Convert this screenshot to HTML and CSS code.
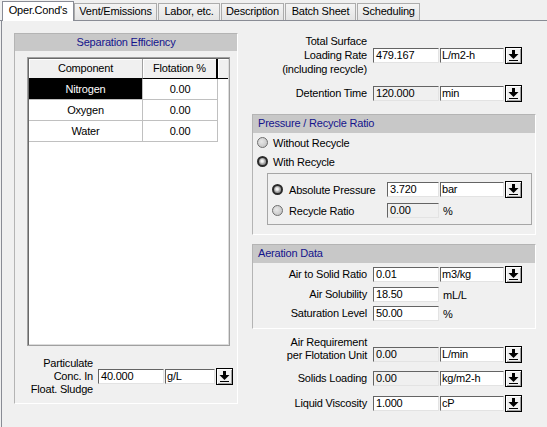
FILE: index.html
```html
<!DOCTYPE html>
<html>
<head>
<meta charset="utf-8">
<link rel="stylesheet" href="styles.css">
</head>
<body>
<div class="tabs">
  <div class="tab active t1">Oper.Cond's</div>
  <div class="tab t2">Vent/Emissions</div>
  <div class="tab t3">Labor, etc.</div>
  <div class="tab t4">Description</div>
  <div class="tab t5">Batch Sheet</div>
  <div class="tab t6">Scheduling</div>
</div>
<div class="page">
  <div class="group lgroup">
    <div class="ghead center">Separation Efficiency</div>
    <div class="grid">
      <div class="gtable">
        <div class="gh c1">Component</div><div class="gh c2">Flotation %</div><div class="gh c3"></div>
        <div class="gc c1 sel">Nitrogen</div><div class="gc c2">0.00</div><div class="gx"></div>
        <div class="gc c1">Oxygen</div><div class="gc c2">0.00</div><div class="gx"></div>
        <div class="gc c1">Water</div><div class="gc c2">0.00</div><div class="gx"></div>
      </div>
    </div>
    <div class="frow part">
      <div class="lbl plbl">Particulate<br>Conc. In<br>Float. Sludge</div>
      <div class="inp">40.000</div>
      <div class="unit u50">g/L</div>
      <span class="dd"><svg width="15" height="15" viewBox="0 0 15 15"><rect x="6" y="2" width="3" height="4"/><path d="M2.5 6h10l-5 5z"/><rect x="3" y="12" width="9" height="1"/></svg></span>
    </div>
  </div>

  <div class="right">
    <div class="frow r1">
      <div class="lbl rl">Total Surface<br>Loading Rate<br>(including recycle)</div>
      <div class="inp">479.167</div>
      <div class="unit">L/m2-h</div>
      <span class="dd"><svg width="15" height="15" viewBox="0 0 15 15"><rect x="6" y="2" width="3" height="4"/><path d="M2.5 6h10l-5 5z"/><rect x="3" y="12" width="9" height="1"/></svg></span>
    </div>
    <div class="frow r2">
      <div class="lbl rl">Detention Time</div>
      <div class="inp ro">120.000</div>
      <div class="unit">min</div>
      <span class="dd"><svg width="15" height="15" viewBox="0 0 15 15"><rect x="6" y="2" width="3" height="4"/><path d="M2.5 6h10l-5 5z"/><rect x="3" y="12" width="9" height="1"/></svg></span>
    </div>

    <div class="group pgroup">
      <div class="ghead">Pressure / Recycle Ratio</div>
      <div class="rrow"><span class="radio"></span><span>Without Recycle</span></div>
      <div class="rrow"><span class="radio on"></span><span>With Recycle</span></div>
      <div class="inner">
        <div class="irow">
          <span class="radio on"></span><span class="ilbl">Absolute Pressure</span>
          <div class="inp w52">3.720</div>
          <div class="unit">bar</div>
          <span class="dd"><svg width="15" height="15" viewBox="0 0 15 15"><rect x="6" y="2" width="3" height="4"/><path d="M2.5 6h10l-5 5z"/><rect x="3" y="12" width="9" height="1"/></svg></span>
        </div>
        <div class="irow ir2">
          <span class="radio"></span><span class="ilbl">Recycle Ratio</span>
          <div class="inp w52 ro">0.00</div>
          <span class="utext">%</span>
        </div>
      </div>
    </div>

    <div class="group agroup">
      <div class="ghead">Aeration Data</div>
      <div class="frow a1">
        <div class="lbl al">Air to Solid Ratio</div>
        <div class="inp">0.01</div>
        <div class="unit">m3/kg</div>
        <span class="dd"><svg width="15" height="15" viewBox="0 0 15 15"><rect x="6" y="2" width="3" height="4"/><path d="M2.5 6h10l-5 5z"/><rect x="3" y="12" width="9" height="1"/></svg></span>
      </div>
      <div class="frow a2">
        <div class="lbl al">Air Solubility</div>
        <div class="inp">18.50</div>
        <span class="utext">mL/L</span>
      </div>
      <div class="frow a3">
        <div class="lbl al">Saturation Level</div>
        <div class="inp">50.00</div>
        <span class="utext">%</span>
      </div>
    </div>

    <div class="frow r3">
      <div class="lbl rl">Air Requirement<br>per Flotation Unit</div>
      <div class="inp ro">0.00</div>
      <div class="unit">L/min</div>
      <span class="dd low"><svg width="15" height="15" viewBox="0 0 15 15"><rect x="6" y="2" width="3" height="4"/><path d="M2.5 6h10l-5 5z"/><rect x="3" y="12" width="9" height="1"/></svg></span>
    </div>
    <div class="frow r4">
      <div class="lbl rl">Solids Loading</div>
      <div class="inp ro">0.00</div>
      <div class="unit">kg/m2-h</div>
      <span class="dd"><svg width="15" height="15" viewBox="0 0 15 15"><rect x="6" y="2" width="3" height="4"/><path d="M2.5 6h10l-5 5z"/><rect x="3" y="12" width="9" height="1"/></svg></span>
    </div>
    <div class="frow r5">
      <div class="lbl rl">Liquid Viscosity</div>
      <div class="inp">1.000</div>
      <div class="unit">cP</div>
      <span class="dd"><svg width="15" height="15" viewBox="0 0 15 15"><rect x="6" y="2" width="3" height="4"/><path d="M2.5 6h10l-5 5z"/><rect x="3" y="12" width="9" height="1"/></svg></span>
    </div>
  </div>
</div>
</body>
</html>
```
FILE: styles.css
```css
* { box-sizing: border-box; }
html, body { margin: 0; padding: 0; }
body {
  width: 547px;
  height: 427px;
  overflow: hidden;
  background: #f0f0f0;
  font-family: "Liberation Sans", Arial, sans-serif;
  font-size: 11px;
  letter-spacing: -0.2px;
  color: #000;
}

/* tabs */
.tabs {
  display: flex;
  align-items: flex-end;
  height: 21px;
  padding-left: 2px;
  border-bottom: 1px solid #898c95;
}
.tab {
  height: 17px;
  line-height: 15px;
  text-align: center;
  white-space: nowrap;
  border: 1px solid #acacac;
  border-bottom: none;
  background: linear-gradient(#f4f4f4, #e4e4e4);
  margin-left: 1px;
}
.tab.active {
  height: 20px;
  line-height: 17px;
  margin-bottom: -1px;
  margin-left: 0;
  background: #fff;
  border-color: #898c95;
}
.t1 { width: 72px; }
.t2 { width: 83px; margin-left: 0; }
.t3 { width: 62px; }
.t4 { width: 63px; }
.t5 { width: 71px; }
.t6 { width: 63px; }

/* page */
.page {
  display: flex;
  align-items: flex-start;
  height: 406px;
  margin-left: 1px;
  border-left: 1px solid #898c95;
  padding-top: 12px;
}

.group {
  border: 1px solid;
  border-color: #b4b4b4 #ffffff #ffffff #b4b4b4;
}
.ghead {
  height: 18px;
  line-height: 17px;
  background: #c8c8c8;
  color: #14148c;
  padding-left: 5px;
}
.ghead.center { text-align: center; padding-left: 0; height: 17px; line-height: 16px; }

/* left group */
.lgroup {
  width: 224px;
  height: 371px;
  margin-left: 12px;
}
.grid {
  width: 203px;
  height: 289px;
  margin: 6px 0 0 12px;
  border: 1px solid #a0a0a0;
  box-shadow: inset 1px 1px #696969, inset -1px -1px #dcdcdc;
  padding: 1px;
  background: #fff;
}
.gtable {
  display: grid;
  grid-template-columns: 114px 75px 1fr;
}
.gh {
  height: 20px;
  line-height: 18px;
  background: #f0f0f0;
  border-bottom: 1px solid #000;
  text-align: center;
  box-shadow: inset 1px 1px #fff;
}
.gh.c1 { border-right: 1px solid #a0a0a0; }
.gh.c2 { border-right: 2px solid #000; }
.gh.c3 { background: #f0f0f0; }
.gc {
  height: 21px;
  line-height: 20px;
  text-align: center;
  border-right: 1px solid #c0c0c0;
  border-bottom: 1px solid #c0c0c0;
  background: #fff;
}
.gc.sel { background: #000; color: #fff; }
.gx { height: 21px; }

/* form rows */
.frow { display: flex; align-items: center; }
.lbl {
  text-align: right;
  line-height: 13px;
  white-space: nowrap;
  margin-right: 6px;
}
.inp, .unit {
  height: 15px;
  line-height: 13px;
  padding-left: 2px;
  background: #fff;
  border-top: 1px solid #646464;
  border-left: 1px solid #646464;
  border-right: 1px solid #e3e3e3;
  border-bottom: 1px solid #e3e3e3;
  white-space: nowrap;
  overflow: hidden;
}
.inp { width: 66px; }
.inp.ro { background: #f0f0f0; }
.inp.w52 { width: 52px; }
.unit { width: 64px; margin-left: 1px; padding-left: 1px; }
.unit.u50 { width: 50px; }
.utext { margin-left: 1px; padding-left: 3px; }
.dd {
  display: block;
  width: 17px;
  height: 17px;
  margin-left: 1px;
  border: 1px solid #000;
  background: #f0f0f0;
  box-shadow: inset 1px 1px #fff, inset -1px -1px #a0a0a0;
}
.dd svg { display: block; fill: #000; }
.dd.low { margin-bottom: -1px; }

.part { height: 39px; margin-top: 11px; }
.plbl { width: 78px; margin-right: 5px; line-height: 13px; }

/* right column */
.right {
  width: 284px;
  margin-left: 14px;
  display: flex;
  flex-direction: column;
}
.rl { width: 115px; }
.al { width: 114px; }
.r1 { height: 42px; margin-top: 1px; }
.r1 .lbl { line-height: 14px; }
.r2 { height: 17px; margin-top: 9px; }

.pgroup { height: 121px; margin-top: 12px; }
.rrow {
  display: flex;
  align-items: center;
  height: 19px;
  padding-left: 4px;
}
.rrow .radio { margin-right: 5px; }
.radio {
  display: block;
  flex: none;
  width: 11px;
  height: 11px;
  border-radius: 50%;
  border: 1px solid #6e6e6e;
  background: radial-gradient(circle at 40% 40%, #e8e8e8, #bdbdbd);
}
.radio.on {
  border: 2px solid #2a2a2a;
  background: radial-gradient(circle at 45% 45%, #f4f4f4 0 1px, #a0a0a0 3px);
}
.inner {
  height: 52px;
  margin: 2px 3px 0 14px;
  border: 1px solid #a6a6a6;
  padding: 7px 0 0 4px;
}
.irow { display: flex; align-items: center; height: 17px; }
.irow .radio { margin-right: 6px; }
.ilbl { width: 98px; white-space: nowrap; }
.ir2 { margin-top: 4px; }

.agroup { height: 85px; margin-top: 9px; }
.a1 { height: 17px; margin-top: 3px; }
.a2 { height: 17px; margin-top: 3px; }
.a3 { height: 17px; margin-top: 2px; }

.r3 { height: 26px; margin-top: 7px; align-items: flex-end; }
.r4 { height: 17px; margin-top: 8px; }
.r5 { height: 17px; margin-top: 8px; }
```
